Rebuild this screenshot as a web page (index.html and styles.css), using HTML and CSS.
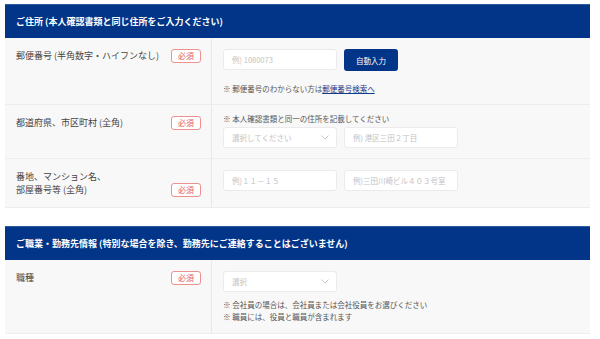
FILE: index.html
```html
<!DOCTYPE html>
<html lang="ja">
<head>
<meta charset="UTF-8">
<meta name="viewport" content="width=device-width, initial-scale=1.0">
<title>お客様情報入力</title>
<link rel="stylesheet" href="styles.css">
</head>
<body>
<div class="page">
    <!-- ご住所 -->
    <section class="form-section">
        <h2 class="section-title">ご住所 (本人確認書類と同じ住所をご入力ください)</h2>
        <div class="form-row">
            <div class="form-label">
                <span class="label-text">郵便番号 (半角数字・ハイフンなし)</span>
                <span class="required">必須</span>
            </div>
            <div class="form-field">
                <div class="field-line">
                    <input type="text" class="text-input" placeholder="例) 1080073">
                    <button type="button" class="btn-auto">自動入力</button>
                </div>
                <p class="note note-zip">※ 郵便番号のわからない方は<a href="#" class="note-link">郵便番号検索へ</a></p>
            </div>
        </div>
        <div class="form-row">
            <div class="form-label">
                <span class="label-text">都道府県、市区町村 (全角)</span>
                <span class="required">必須</span>
            </div>
            <div class="form-field">
                <p class="note note-top">※ 本人確認書類と同一の住所を記載してください</p>
                <div class="field-line">
                    <div class="select-box">
                        <span class="select-text">選択してください</span>
                        <svg class="chevron" width="8" height="5" viewBox="0 0 8 5"><path d="M0.5 0.5 L4 4 L7.5 0.5" fill="none" stroke="#c4c4c4" stroke-width="0.9"/></svg>
                    </div>
                    <input type="text" class="text-input" placeholder="例) 港区三田２丁目">
                </div>
            </div>
        </div>
        <div class="form-row">
            <div class="form-label label-multi">
                <span class="label-text">番地、マンション名、<br>部屋番号等 (全角)</span>
                <span class="required">必須</span>
            </div>
            <div class="form-field">
                <div class="field-line">
                    <input type="text" class="text-input" placeholder="例)１１－１５">
                    <input type="text" class="text-input" placeholder="例)三田川崎ビル４０３号室">
                </div>
            </div>
        </div>
    </section>

    <!-- ご職業・勤務先情報 -->
    <section class="form-section">
        <h2 class="section-title">ご職業・勤務先情報 (特別な場合を除き、勤務先にご連絡することはございません)</h2>
        <div class="form-row">
            <div class="form-label">
                <span class="label-text">職種</span>
                <span class="required">必須</span>
            </div>
            <div class="form-field">
                <div class="select-box">
                    <span class="select-text">選択</span>
                    <svg class="chevron" width="8" height="5" viewBox="0 0 8 5"><path d="M0.5 0.5 L4 4 L7.5 0.5" fill="none" stroke="#c4c4c4" stroke-width="0.9"/></svg>
                </div>
                <p class="note note-job">※ 会社員の場合は、会社員または会社役員をお選びください<br>※ 職員には、役員と職員が含まれます</p>
            </div>
        </div>
    </section>
</div>
</body>
</html>
```

FILE: styles.css
```css
/* 全体 */
body {
    margin: 0;
    background: #fff;
    font-family: "Noto Sans CJK JP", "Noto Sans", sans-serif;
    color: #444;
}
.page {
    width: 585px;
    padding: 4px 0 0 5px;
}
/* セクション */
.form-section {
    margin-bottom: 18px;
    background: #f8f8f8;
}
.section-title {
    margin: 0;
    height: 34px;
    line-height: 34px;
    padding-left: 11px;
    background: #023587;
    border-top: 1px solid #2e5aa0;
    box-sizing: border-box;
    color: #fff;
    font-size: 9px;
    font-weight: bold;
}
/* 行 */
.form-row {
    display: grid;
    grid-template-columns: 207px 1fr;
    border-bottom: 1px solid #ebedf0;
}
.form-label {
    display: flex;
    justify-content: space-between;
    align-items: flex-start;
    padding: 11px 10px 11px 11px;
    border-right: 1px solid #e4e9ef;
    box-sizing: border-box;
}
.label-text {
    font-size: 9px;
    line-height: 14px;
    color: #444;
}
.label-multi .label-text {
    line-height: 13px;
    padding-top: 0;
}
.label-multi .required {
    align-self: flex-end;
    margin-bottom: -1px;
}
.required {
    flex: none;
    width: 30px;
    height: 14px;
    line-height: 12px;
    box-sizing: border-box;
    border: 1px solid #ee9090;
    border-radius: 3px;
    background: #fff;
    color: #e35d5d;
    font-size: 8px;
    text-align: center;
}
.form-field {
    padding: 11px 11px 10px 11px;
}
.field-line {
    display: flex;
    gap: 7px;
}
/* 入力 */
.text-input,
.select-box {
    width: 114px;
    height: 21px;
    box-sizing: border-box;
    border: 1px solid #ebebeb;
    border-radius: 3px;
    background: #fff;
    padding: 0 8px;
    font-family: inherit;
    font-size: 7.5px;
    color: #444;
    outline: none;
}
.text-input::placeholder {
    color: #c2c2c2;
}
.select-box {
    display: flex;
    align-items: center;
    justify-content: space-between;
}
.select-text {
    color: #c2c2c2;
}
.chevron {
    margin-right: -1px;
}
.btn-auto {
    width: 54px;
    height: 22px;
    border: none;
    border-radius: 3px;
    background: #023587;
    color: #fff;
    font-family: inherit;
    font-size: 7.5px;
    cursor: pointer;
}
/* 注記 */
.note {
    margin: 0;
    font-size: 7.5px;
    line-height: 11px;
    color: #555;
}
.note-zip {
    margin-top: 12px;
}
.note-top {
    margin-top: -3px;
    margin-bottom: 3px;
}
.note-job {
    margin-top: 7px;
    line-height: 12px;
}
.note-link {
    color: #123c8a;
}
```
